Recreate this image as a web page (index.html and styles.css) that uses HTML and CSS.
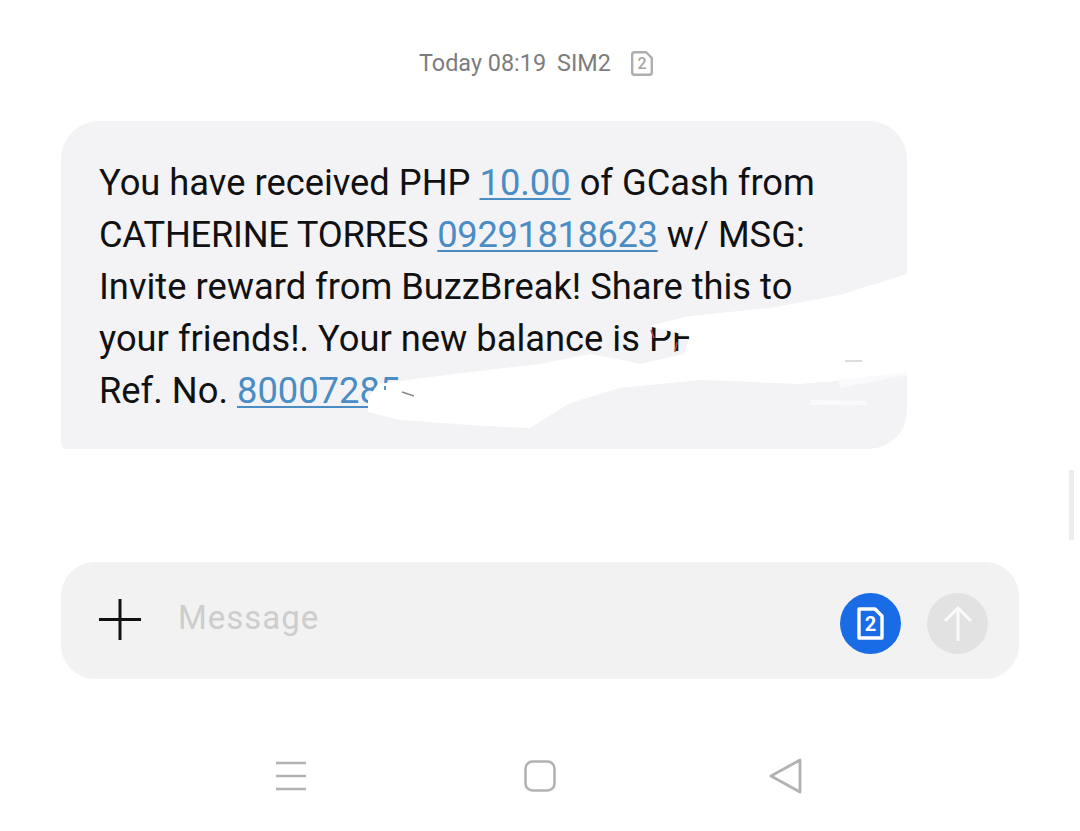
FILE: index.html
```html
<!DOCTYPE html>
<html lang="en">

<head>
  <meta charset="UTF-8" />
  <title>Message</title>
  <link rel="stylesheet" href="styles.css">
</head>

<body class="screen">
  <div class="stamp">
    <span>Today 08:19</span>
    <span class="stamp-sim">SIM2</span>
    <svg class="stamp-icon" width="22" height="25" viewBox="0 0 22 25">
      <path d="M3.500 1.200H15L20.800 7V21.500a2.300 2.300 0 0 1-2.300 2.300H3.500a2.300 2.300 0 0 1-2.300-2.300V3.500a2.300 2.300 0 0 1 2.300-2.300Z" fill="none" stroke="#aeaeae" stroke-width="2.400" />
      <text x="11" y="18" text-anchor="middle" class="sim-num sim-num-grey">2</text>
    </svg>
  </div>

  <div class="bubble">
    <p class="bubble-text">You have received PHP <a class="lnk">10.00</a> of GCash from<br><span class="caps">CATHERINE TORRES</span> <a class="lnk lnk-tight">09291818623</a> w/ MSG:<br>Invite reward from BuzzBreak! Share this to<br>your friends!. Your new balance is PF<br>Ref. No. <a class="lnk">80007285</a></p>
    <!-- hand scribble hiding the private part of the message, drawn in page coordinates -->
    <svg class="scribble" width="846" height="328" viewBox="61 121 846 328">
      <path d="M368 398L378 384L415 379L470 372L540 364L590 354L612 358L640 364L684 354L690 336L664 330L648 326L690 316L770 308L840 295L907 274V372L870 378L800 384L700 380L640 386L620 388L570 403L530 428L470 425L400 420L368 412Z" fill="#fff" />
      <path d="M838 380L907 372V375L840 388Z" fill="#fafafc" />
      <path d="M810 400L866 401V405L810 405Z" fill="#fafafc" />
      <path d="M845 361H862" stroke="#bdbdbd" stroke-width="1" />
      <path d="M402 392L414 396" stroke="#8a8a8a" stroke-width="1.500" />
      <path d="M385 386V390" stroke="#5a93c4" stroke-width="2" />
      <path d="M651 330L654 338M677 342L675 352" stroke="#b8433a" stroke-width="1.500" fill="none" />
    </svg>
  </div>

  <div class="composer">
    <svg class="plus" width="42" height="42" viewBox="0 0 42 42">
      <path d="M0 20.500H42M21 0V41" stroke="#111" stroke-width="3" />
    </svg>
    <span class="placeholder">Message</span>
    <span class="round round-blue">
      <svg width="27" height="33" viewBox="0 0 27 33">
        <path d="M2 2H18L25 9V31H2Z" fill="none" stroke="#fff" stroke-width="3.400" stroke-linejoin="round" />
        <text x="13.500" y="24" text-anchor="middle" class="sim-num sim-num-white">2</text>
      </svg>
    </span>
    <span class="round round-grey">
      <svg width="30" height="36" viewBox="0 0 30 36">
        <path d="M15 35V2M2 15L15 2L28 15" fill="none" stroke="#fafafa" stroke-width="3" />
      </svg>
    </span>
  </div>

  <div class="navbar">
    <svg width="34" height="32" viewBox="0 0 34 32">
      <path d="M2 3H32M2 16H32M2 29H32" stroke="#b2b2b2" stroke-width="2.400" />
    </svg>
    <svg class="nav-home" width="32" height="32" viewBox="0 0 32 32">
      <rect x="1.500" y="1.500" width="29" height="29" rx="7" fill="none" stroke="#b2b2b2" stroke-width="2.600" />
    </svg>
    <svg width="34" height="36" viewBox="0 0 34 36">
      <path d="M31 2V34L2 18Z" fill="none" stroke="#b2b2b2" stroke-width="2.800" stroke-linejoin="round" />
    </svg>
  </div>

  <div class="scroll-mark"></div>
</body>

</html>
```

FILE: styles.css
```css
* { box-sizing: border-box; }

html, body { margin: 0; height: 100%; }

.screen {
  position: relative;
  width: 1080px;
  height: 831px;
  overflow: hidden;
  background: #fff;
  font-family: Roboto, "Liberation Sans", sans-serif;
  padding-top: 46px;
}

.stamp {
  display: flex;
  align-items: center;
  height: 34px;
  padding-left: 419px;
  color: #7d7d7d;
  font-size: 23.4px;
}
.stamp-sim { margin-left: 11px; }
.stamp-icon { margin-left: 20px; }

.sim-num { font-family: Roboto, sans-serif; font-weight: 500; }
.sim-num-grey { font-size: 16px; fill: #a4a4a4; }
.sim-num-white { font-size: 20px; font-weight: 700; fill: #fff; }

.bubble {
  position: relative;
  width: 846px;
  height: 328px;
  margin: 41px 0 0 61px;
  padding: 36px 0 0 38px;
  background: #f3f3f6;
  border-radius: 38px 38px 38px 6px;
}
.bubble-text {
  margin: 0;
  color: #111;
  font-size: 36.3px;
  line-height: 52px;
  white-space: nowrap;
}
.caps { letter-spacing: -0.25px; }
.lnk {
  color: #4a8cc4;
  text-decoration: underline;
  text-decoration-thickness: 2px;
  text-underline-offset: 3px;
}
.lnk-tight { letter-spacing: -0.37px; }

.scribble {
  position: absolute;
  left: 0;
  top: 0;
}

.composer {
  display: flex;
  align-items: center;
  width: 958px;
  height: 117px;
  margin: 113px 0 0 61px;
  padding: 0 31px 0 38px;
  background: #f2f2f2;
  border-radius: 34px;
}
.plus { margin-bottom: 2px; }
.placeholder {
  flex: 1;
  margin: 0 0 6px 37px;
  color: #cdcdcd;
  font-size: 33px;
  letter-spacing: 1px;
}
.round {
  display: flex;
  align-items: center;
  justify-content: center;
  width: 61px;
  height: 61px;
  margin-top: 6px;
  border-radius: 50%;
}
.round-blue { background: #1a6be6; margin-right: 26px; }
.round-grey { background: #e2e2e2; }

.navbar {
  display: flex;
  align-items: center;
  height: 38px;
  margin: 78px 0 0 274px;
}
.nav-home { margin: 0 213px 0 216px; }

.scroll-mark {
  position: absolute;
  left: 1069px;
  top: 470px;
  width: 5px;
  height: 70px;
  background: #ececec;
}
```
